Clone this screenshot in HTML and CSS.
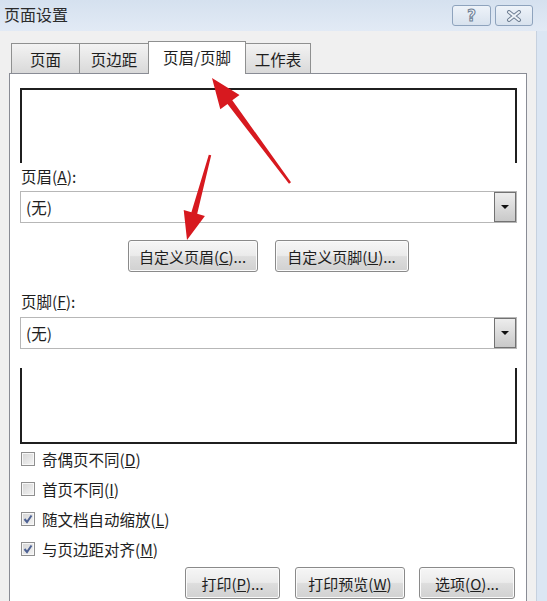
FILE: index.html
```html
<!DOCTYPE html>
<html lang="zh-CN">
<head>
<meta charset="utf-8">
<title>页面设置</title>
<link rel="stylesheet" href="styles.css">
</head>
<body>
<div class="win">
  <div class="titlebar">
    <span class="title">页面设置</span>
    <div class="tbtns">
      <span class="tbtn help">?</span>
      <span class="tbtn close">
        <svg width="16" height="12" viewBox="0 0 16 12"><path d="M3 2 L13 10 M13 2 L3 10" stroke="#6f7f94" stroke-width="4" stroke-linecap="round"/><path d="M3 2 L13 10 M13 2 L3 10" stroke="#eef3f8" stroke-width="2" stroke-linecap="round"/></svg>
      </span>
    </div>
  </div>
  <div class="main">
    <div class="client">
      <div class="tabs">
        <div class="tab t1">页面</div>
        <div class="tab t2">页边距</div>
        <div class="tab t3 active">页眉/页脚</div>
        <div class="tab t4">工作表</div>
      </div>
      <div class="panel">
        <div class="preview preview-top"></div>
        <div class="label">页眉(<u>A</u>):</div>
        <div class="combo"><span class="combo-text">(无)</span><span class="drop"><i class="tri"></i></span></div>
        <div class="btnrow">
          <div class="btn b-hdr">自定义页眉(<u>C</u>)...</div>
          <div class="btn b-ftr">自定义页脚(<u>U</u>)...</div>
        </div>
        <div class="label label-ftr">页脚(<u>F</u>):</div>
        <div class="combo combo-ftr"><span class="combo-text">(无)</span><span class="drop"><i class="tri"></i></span></div>
        <div class="preview preview-bottom"></div>
        <div class="checks">
          <div class="row"><span class="cb"></span><span>奇偶页不同(<u>D</u>)</span></div>
          <div class="row"><span class="cb"></span><span>首页不同(<u>I</u>)</span></div>
          <div class="row"><span class="cb on"><svg width="12" height="12" viewBox="0 0 12 12"><path d="M2.5 6 L5 9 L9.5 2.5" fill="none" stroke="#4d6193" stroke-width="2"/></svg></span><span>随文档自动缩放(<u>L</u>)</span></div>
          <div class="row"><span class="cb on"><svg width="12" height="12" viewBox="0 0 12 12"><path d="M2.5 6 L5 9 L9.5 2.5" fill="none" stroke="#4d6193" stroke-width="2"/></svg></span><span>与页边距对齐(<u>M</u>)</span></div>
        </div>
        <div class="btnrow bottom">
          <div class="btn b-print">打印(<u>P</u>)...</div>
          <div class="btn b-preview">打印预览(<u>W</u>)</div>
          <div class="btn b-opt">选项(<u>O</u>)...</div>
        </div>
      </div>
    </div>
    <div class="rframe"></div>
  </div>
  <svg class="arrows" width="547" height="601" viewBox="0 0 547 601">
    <polygon fill="#d7191f" points="291,182.3 232.3,100.3 239.5,94.9 212,78 220.3,109.3 227.5,103.9 289,183.7"/>
    <polygon fill="#d7191f" points="211.2,155.3 197.2,213.8 204.9,215.9 187,240 183.7,210.1 191.4,212.2 208.8,154.7"/>
  </svg>
</div>
</body>
</html>
```
FILE: styles.css
```css
body {
  margin: 0;
  width: 547px;
  height: 601px;
  overflow: hidden;
  font-family: "Noto Sans CJK SC", "Liberation Sans", sans-serif;
  color: #1e1e1e;
}
.win {
  position: relative;
  width: 547px;
  height: 601px;
  overflow: hidden;
  background: #f0f0f0;
}
.titlebar {
  height: 31px;
  display: flex;
  justify-content: space-between;
  align-items: flex-start;
  background: linear-gradient(#d5e1ef, #e2eaf5);
}
.title {
  font-size: 16px;
  line-height: 20px;
  margin: 4px 0 0 4px;
  color: #2b2b2b;
}
.tbtns {
  display: flex;
  gap: 4px;
  margin: 5px 14px 0 0;
}
.tbtn {
  width: 39px;
  height: 21px;
  box-sizing: border-box;
  border: 1px solid #8ea3bd;
  border-radius: 3px;
  background: linear-gradient(#eef3f9, #d8e2ee);
  display: flex;
  align-items: center;
  justify-content: center;
}
.tbtn.close { width: 38px; }
.help {
  font-family: "DejaVu Sans", sans-serif;
  font-weight: bold;
  font-size: 15px;
  color: #eef3f8;
  -webkit-text-stroke: 1px #6f7f94;
}
.main {
  display: flex;
  height: 570px;
}
.client {
  width: 537px;
  padding-top: 10px;
  box-sizing: border-box;
}
.rframe {
  width: 10px;
  background: #dbe6f3;
  border-left: 1px solid #c6d1df;
}
.tabs {
  display: flex;
  align-items: flex-end;
  margin-left: 11px;
  height: 32px;
  position: relative;
  z-index: 1;
}
.tab {
  height: 30px;
  box-sizing: border-box;
  border: 1px solid #8f9090;
  border-bottom: none;
  background: linear-gradient(#f3f3f3, #d9d9d9);
  font-size: 15.5px;
  display: flex;
  align-items: center;
  justify-content: center;
  margin-right: -1px;
}
.t1 { width: 69px; }
.t2 { width: 70px; }
.t3 { width: 98px; }
.t4 { width: 66px; }
.tab.active {
  height: 33px;
  background: #fff;
  margin-bottom: -1px;
  padding-bottom: 3px;
}
.panel {
  margin-left: 9px;
  width: 518px;
  height: 540px;
  box-sizing: border-box;
  border: 1px solid #898c95;
  background: #fff;
}
.preview {
  margin: 14px 0 0 10px;
  width: 497px;
  height: 75px;
  box-sizing: border-box;
  border: 2px solid #1f1f1f;
  border-bottom: none;
}
.preview-bottom {
  margin-top: 19px;
  height: 76px;
  border: 2px solid #1f1f1f;
  border-top: none;
}
.label {
  margin: 3px 0 0 11px;
  font-size: 15.5px;
  line-height: 20px;
}
.label-ftr { margin-top: 19px; }
.combo {
  margin: 5px 0 0 10px;
  width: 497px;
  height: 32px;
  box-sizing: border-box;
  border: 1px solid #b7b7b7;
  display: flex;
  align-items: center;
  justify-content: space-between;
}
.combo-ftr { margin-top: 6px; }
.combo-text {
  padding-left: 5px;
  font-size: 15.5px;
}
.drop {
  width: 22px;
  height: 30px;
  box-sizing: border-box;
  border: 1px solid #727272;
  background: linear-gradient(#ededed, #c9c9c9);
  display: flex;
  align-items: center;
  justify-content: center;
}
.tri {
  width: 0;
  height: 0;
  border-left: 4px solid transparent;
  border-right: 4px solid transparent;
  border-top: 4px solid #111;
}
.btnrow {
  display: flex;
  justify-content: center;
  gap: 17px;
  margin-top: 17px;
}
.btn {
  height: 32px;
  box-sizing: border-box;
  border: 1px solid #8a8a8a;
  border-radius: 3px;
  background: linear-gradient(#f6f6f6 0%, #ebebeb 48%, #dddddd 52%, #d1d1d1 100%);
  box-shadow: inset 0 0 0 1px #fbfbfb;
  font-size: 15px;
  display: flex;
  align-items: center;
  justify-content: center;
}
.b-hdr { width: 130px; }
.b-ftr { width: 134px; }
.checks {
  margin-left: 11px;
}
.row {
  height: 30px;
  display: flex;
  align-items: center;
  gap: 7px;
  font-size: 15.5px;
}
.cb {
  width: 14px;
  height: 14px;
  box-sizing: border-box;
  border: 1px solid #8f8f8f;
  background: linear-gradient(135deg, #d4d4d4, #f4f4f4);
  box-shadow: inset 0 0 0 1px #f7f7f7;
  display: flex;
  align-items: center;
  justify-content: center;
}
.btnrow.bottom {
  justify-content: flex-end;
  gap: 0;
  margin: 3px 11px 0 0;
}
.b-print { width: 95px; }
.b-preview { width: 110px; margin-left: 15px; }
.b-opt { width: 96px; margin-left: 14px; }
.arrows {
  position: absolute;
  left: 0;
  top: 0;
  pointer-events: none;
}
```
